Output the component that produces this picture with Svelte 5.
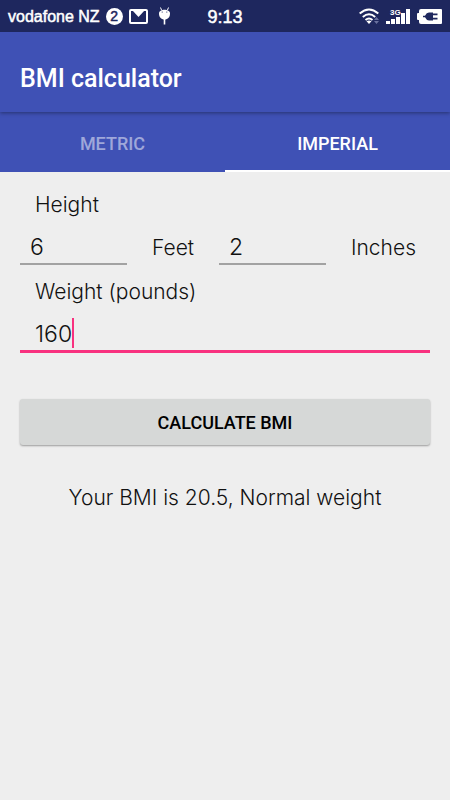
<script>
    const tabs = ['Metric', 'Imperial'];

    let unit = $state('Imperial');
    let feet = $state('6');
    let inches = $state('2');
    let pounds = $state('160');
    let cm = $state('188');
    let kilos = $state('73');
    let result = $state('Your BMI is 20.5, Normal weight');

    function category(bmi) {
        if (bmi < 18.5) return 'Underweight';
        if (bmi < 25) return 'Normal weight';
        if (bmi < 30) return 'Overweight';
        return 'Obese';
    }

    function calculate(event) {
        event.preventDefault();
        let bmi;
        if (unit === 'Imperial') {
            const height = Number(feet) * 12 + Number(inches);
            bmi = (Number(pounds) * 703) / (height * height);
        } else {
            const height = Number(cm) / 100;
            bmi = Number(kilos) / (height * height);
        }
        result = Number.isFinite(bmi) ? `Your BMI is ${bmi.toFixed(1)}, ${category(bmi)}` : '';
    }
</script>

<div class="screen">
    <div class="status">
        <span class="carrier">vodafone NZ</span>
        <span class="count">2</span>
        <svg class="mail" width="19" height="15" viewBox="0 0 19 15">
            <rect x="1" y="1" width="17" height="13" rx="1" fill="none" stroke="#fff" stroke-width="2" />
            <path d="M3 1 H16 L9.5 8 Z" fill="#fff" />
        </svg>
        <svg class="droid" width="13" height="18" viewBox="0 0 13 18">
            <path d="M2.5 0.5 L3.5 3 M10.5 0.5 L9.5 3" stroke="#fff" stroke-width="1" />
            <path d="M1 6.5 C1 1.5 12 1.5 12 6.5 C12 10 10 12.5 6.5 12.5 C3 12.5 1 10 1 6.5 Z" fill="#fff" />
            <path d="M6.5 12 V17.5" stroke="#fff" stroke-width="1.6" />
            <circle cx="4.2" cy="5" r="0.6" fill="#1e275e" />
            <circle cx="8.8" cy="5" r="0.6" fill="#1e275e" />
        </svg>
        <span class="time">9:13</span>
        <div class="signals">
            <svg width="21" height="17" viewBox="0 0 21 17">
                <g fill="none" stroke="#fff" stroke-width="2">
                    <path d="M0.7 5.5 Q10 -2.5 19.3 5.5" />
                    <path d="M3.8 9 Q10 3.5 16.2 9" />
                    <path d="M6.5 12 Q10 9 13.5 12" />
                </g>
                <path d="M7.5 13.2 Q10 11.8 12.5 13.2 L10 16 Z" fill="#fff" />
                <path d="M15 12 L17.5 9 L20 12 Z M15 13 H20 L17.5 16 Z" fill="#69709e" />
            </svg>
            <svg width="25" height="17" viewBox="0 0 25 17">
                <path d="M0 13h4v3H0z M5 11h4v5H5z M10 9h4v7h-4z M15 5h4v11h-4z M20 1h4v15h-4z" fill="#fff" />
                <text x="4" y="7" class="network">3G</text>
            </svg>
            <svg width="25" height="15" viewBox="0 0 25 15">
                <path d="M4 0 H24 Q25 0 25 1 V14 Q25 15 24 15 H4 Q2 15 2 13 V11 H1 Q0 11 0 10 V5 Q0 4 1 4 H2 V2 Q2 0 4 0 Z" fill="#fff" />
                <path d="M6 6.7 H8 Q9.5 3.5 12 3.5 H16 V11.5 H12 Q9.5 11.5 8 8.3 H6 Z M16 4.5 H20.5 V6.2 H16 Z M16 8.8 H20.5 V10.5 H16 Z" fill="#1e275e" />
            </svg>
        </div>
    </div>

    <header>
        <h1>BMI calculator</h1>
    </header>

    <div class="tabs" role="tablist">
        {#each tabs as tab}
            <button
                type="button"
                role="tab"
                class:active={unit === tab}
                aria-selected={unit === tab}
                onclick={() => (unit = tab)}
            >
                {tab}
            </button>
        {/each}
    </div>

    <form onsubmit={calculate}>
        {#if unit === 'Imperial'}
            <label class="title" for="feet">Height</label>
            <div class="row">
                <input id="feet" inputmode="numeric" bind:value={feet} />
                <label for="feet">Feet</label>
                <input id="inches" inputmode="numeric" bind:value={inches} />
                <label for="inches">Inches</label>
            </div>
            <label class="title" for="pounds">Weight (pounds)</label>
            <div class="weight">
                <input id="pounds" inputmode="numeric" bind:value={pounds} />
                <span class="caret" style="--chars: {pounds.length}"></span>
            </div>
        {:else}
            <label class="title" for="cm">Height (cm)</label>
            <div class="row">
                <input id="cm" inputmode="numeric" bind:value={cm} />
            </div>
            <label class="title" for="kilos">Weight (kg)</label>
            <div class="weight">
                <input id="kilos" inputmode="numeric" bind:value={kilos} />
                <span class="caret" style="--chars: {kilos.length}"></span>
            </div>
        {/if}
        <button class="calculate" type="submit">Calculate BMI</button>
        <output for="feet inches pounds">{result}</output>
    </form>
</div>

<style>
    :global(body) {
        margin: 0;
        background: #eee;
    }

    .screen {
        min-height: 100vh;
        background: #eee;
        color: #111;
        font-family: Inter, "Liberation Sans", sans-serif;
        font-size: 21px;
        font-weight: 300;
    }

    .status {
        position: relative;
        display: flex;
        align-items: center;
        box-sizing: border-box;
        height: 32px;
        padding: 0 8px;
        background: #1e275e;
        color: #fff;
        font-family: "Liberation Sans", Arial, sans-serif;
        font-size: 16px;
        font-weight: 400;
        -webkit-text-stroke: 0.5px #fff;
    }

    .carrier {
        padding-top: 2px;
    }

    .count {
        width: 17px;
        margin-left: 6px;
        border-radius: 50%;
        background: #fff;
        color: #1e275e;
        font-size: 14px;
        line-height: 17px;
        text-align: center;
        -webkit-text-stroke-color: #1e275e;
    }

    .mail { margin-left: 6px; }
    .droid { margin-left: 10px; }

    .time {
        position: absolute;
        top: 7px;
        left: 50%;
        transform: translateX(-50%);
        font-size: 18px;
    }

    .signals {
        display: flex;
        align-items: center;
        gap: 6px;
        margin-left: auto;
    }

    .network {
        fill: #fff;
        font-family: "Liberation Sans", Arial, sans-serif;
        font-size: 8px;
        font-weight: 700;
        -webkit-text-stroke: 0;
    }

    header {
        position: relative;
        display: flex;
        align-items: center;
        height: 80px;
        padding: 0 20px;
        background: #3f51b5;
        box-shadow: 0 1px 4px rgba(0, 0, 0, 0.4);
        clip-path: inset(0 0 -6px 0);
    }

    h1 {
        margin: 0;
        padding-top: 12px;
        color: #fff;
        font-family: Roboto, sans-serif;
        font-size: 25px;
        font-weight: 500;
    }

    .tabs {
        display: flex;
        height: 60px;
        background: #3f51b5;
    }

    .tabs button {
        flex: 1;
        padding: 4px 0 0;
        border: 0;
        border-bottom: 2px solid transparent;
        background: none;
        color: rgba(255, 255, 255, 0.5);
        font-family: Roboto, sans-serif;
        font-size: 18px;
        font-weight: 500;
        text-transform: uppercase;
        cursor: pointer;
    }

    .tabs .active {
        border-bottom-color: #fff;
        color: #fff;
    }

    form {
        display: flex;
        flex-direction: column;
        padding: 17px 20px;
    }

    label { line-height: 32px; }
    .title { padding-left: 15px; }

    .row {
        display: grid;
        grid-template-columns: 107px 92px 107px 1fr;
        padding-bottom: 11px;
    }

    .row label {
        padding: 11px 0 0 25px;
    }

    input {
        box-sizing: border-box;
        width: 100%;
        height: 44px;
        padding: 10px 10px 0;
        border: 0;
        border-bottom: 2px solid #a2a2a2;
        border-radius: 0;
        outline: none;
        background: none;
        color: inherit;
        font: inherit;
        font-size: 23px;
    }

    .weight {
        position: relative;
    }

    .weight input {
        height: 45px;
        padding-left: 15px;
        border-bottom: 3px solid #f8317f;
        caret-color: transparent;
    }

    .caret {
        position: absolute;
        top: 10px;
        left: calc(13px + var(--chars) * 13px);
        width: 2px;
        height: 30px;
        background: #f8317f;
    }

    .calculate {
        height: 46px;
        margin-top: 46px;
        border: 0;
        border-radius: 3px;
        background: #d6d8d7;
        box-shadow: 0 1px 2px rgba(0, 0, 0, 0.35);
        color: #000;
        font-family: Roboto, sans-serif;
        font-size: 18px;
        font-weight: 500;
        text-transform: uppercase;
        cursor: pointer;
    }

    output {
        padding-top: 37px;
        line-height: 32px;
        text-align: center;
    }
</style>
